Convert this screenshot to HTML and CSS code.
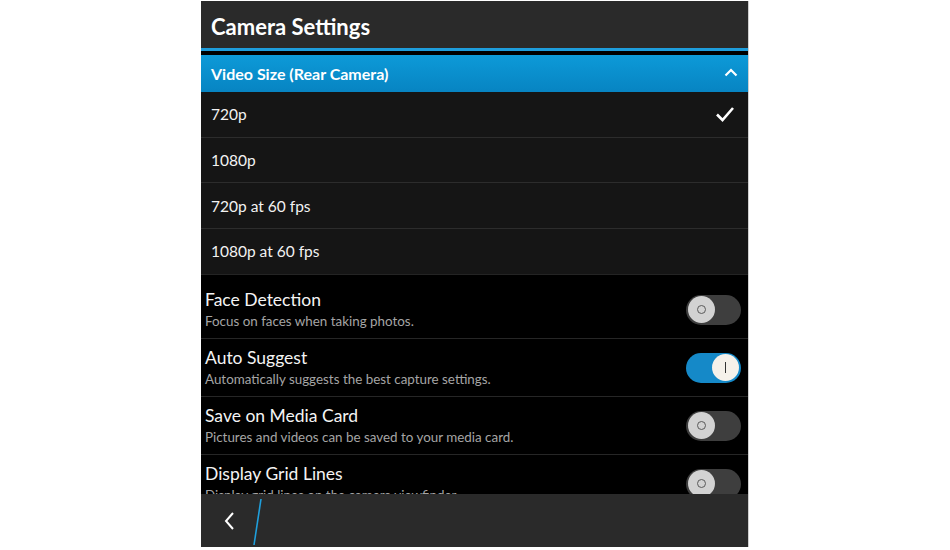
FILE: index.html
```html
<!DOCTYPE html>
<html>
<head>
<meta charset="utf-8">
<link rel="stylesheet" href="styles.css">
</head>
<body>
<div class="screen">
  <div class="titlebar">Camera Settings</div>
  <div class="accent"></div>
  <div class="gap"></div>
  <div class="content">
    <div class="dropdown-head">
      <span>Video Size (Rear Camera)</span>
      <svg class="chev-up" width="14" height="9" viewBox="0 0 14 9"><path d="M1.5 7.5 L7 2 L12.5 7.5" fill="none" stroke="#fff" stroke-width="2.2"/></svg>
    </div>
    <div class="options">
      <div class="opt"><span>720p</span><svg width="20" height="16" viewBox="0 0 20 16"><path d="M2 8.5 L7.5 14 L18 2" fill="none" stroke="#fff" stroke-width="2.6"/></svg></div>
      <div class="opt"><span>1080p</span></div>
      <div class="opt"><span>720p at 60 fps</span></div>
      <div class="opt"><span>1080p at 60 fps</span></div>
    </div>
    <div class="settings">
      <div class="row">
        <div class="texts"><div class="t">Face Detection</div><div class="s">Focus on faces when taking photos.</div></div>
        <div class="toggle off"><div class="knob"><span class="ring"></span></div></div>
      </div>
      <div class="row">
        <div class="texts"><div class="t">Auto Suggest</div><div class="s">Automatically suggests the best capture settings.</div></div>
        <div class="toggle on"><div class="knob"><span class="bar"></span></div></div>
      </div>
      <div class="row">
        <div class="texts"><div class="t">Save on Media Card</div><div class="s">Pictures and videos can be saved to your media card.</div></div>
        <div class="toggle off"><div class="knob"><span class="ring"></span></div></div>
      </div>
      <div class="row">
        <div class="texts"><div class="t">Display Grid Lines</div><div class="s">Display grid lines on the camera viewfinder.</div></div>
        <div class="toggle off"><div class="knob"><span class="ring"></span></div></div>
      </div>
    </div>
  </div>
  <div class="bottombar">
    <svg class="back" width="14" height="20" viewBox="0 0 14 20"><path d="M10 2 L3 10 L10 18" fill="none" stroke="#fff" stroke-width="2"/></svg>
    <svg class="slash" width="12" height="50" viewBox="0 0 12 50"><path d="M9 2 L2 48" stroke="#1f9fdc" stroke-width="1.6"/></svg>
  </div>
</div>
</body>
</html>
```
FILE: styles.css
```css
html, body {
  margin: 0;
  padding: 0;
  background: #fff;
}
body {
  font-family: "Open Sans", "Lato", sans-serif;
  padding-top: 1px;
}
.screen {
  width: 548px;
  height: 546px;
  margin: 0 auto 0 201px;
  background: #000;
  display: flex;
  flex-direction: column;
  overflow: hidden;
  border-right: 1px solid #cfcfcf;
  box-sizing: border-box;
}
.titlebar {
  height: 47px;
  flex: none;
  background: #2a2a2a;
  color: #fff;
  font-family: "Lato", "Open Sans", sans-serif;
  font-weight: 700;
  font-size: 22px;
  line-height: 52px;
  padding-left: 10px;
  box-sizing: border-box;
}
.accent {
  height: 3px;
  flex: none;
  background: #1e9ddb;
}
.gap {
  height: 4px;
  flex: none;
  background: #000;
}
.content {
  flex: 1;
  overflow: hidden;
  display: flex;
  flex-direction: column;
}
.dropdown-head {
  flex: none;
  height: 37px;
  background: linear-gradient(#0d9ad8, #0784c2);
  color: #fff;
  font-family: "Lato", "Open Sans", sans-serif;
  font-weight: 700;
  font-size: 16px;
  display: flex;
  align-items: center;
  justify-content: space-between;
  padding: 0 10px 0 10px;
}
.chev-up { margin-top: -2px; }
.options {
  flex: none;
  background: #151515;
}
.opt {
  height: 44.7px;
  border-bottom: 1px solid #2c2c2c;
  display: flex;
  align-items: center;
  justify-content: space-between;
  padding: 0 13px 0 10px;
  color: #f2f2f2;
  font-family: "Lato", "Open Sans", sans-serif;
  font-size: 15.5px;
}
.opt span { margin-top: 0; }
.opt:last-child {
  border-bottom: 1px solid #242424;
}
.settings {
  flex: none;
  padding-top: 6px;
}
.row {
  height: 57px;
  border-bottom: 1px solid #262626;
  display: flex;
  align-items: center;
  justify-content: space-between;
  padding: 0 7px 0 4px;
}
.texts {
  padding-top: 1px;
}
.t {
  color: #f4f4f4;
  font-family: "Lato", "Open Sans", sans-serif;
  font-size: 17.5px;
  line-height: 22px;
}
.s {
  color: #a5a5a5;
  font-family: "Lato", "Open Sans", sans-serif;
  font-size: 13.4px;
  line-height: 20px;
}
.toggle {
  width: 55px;
  height: 30px;
  border-radius: 15px;
  display: flex;
  align-items: center;
  padding: 0 2px;
  box-sizing: border-box;
  margin-top: 1px;
}
.toggle.off {
  background: #3e3e3e;
  justify-content: flex-start;
}
.toggle.on {
  background: #1589c8;
  justify-content: flex-end;
}
.knob {
  width: 27px;
  height: 27px;
  border-radius: 50%;
  display: flex;
  align-items: center;
  justify-content: center;
}
.off .knob { background: #d2d2d2; }
.on .knob { background: #f5f1ea; }
.ring {
  width: 7px;
  height: 7px;
  border: 1.5px solid #5a5a5a;
  border-radius: 50%;
}
.bar {
  width: 1.5px;
  height: 11px;
  background: #333;
}
.bottombar {
  flex: none;
  height: 53px;
  background: #2a2a2a;
  display: flex;
  align-items: center;
  padding-left: 22px;
}
.back { margin-top: 1px; }
.slash { margin-left: 15px; margin-top: 2px; }
```
